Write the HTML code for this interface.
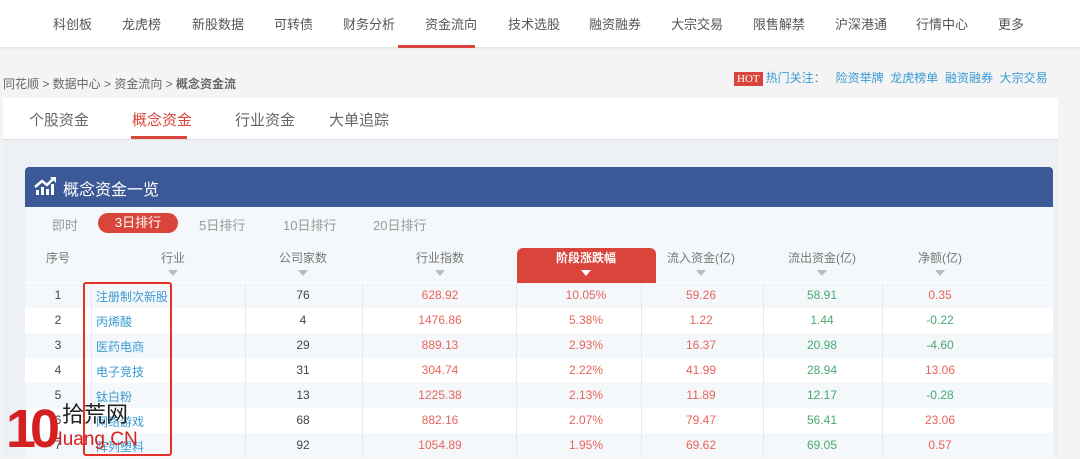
<!DOCTYPE html>
<html><head><meta charset="utf-8"><style>
*{margin:0;padding:0;box-sizing:border-box}
body{width:1080px;height:457px;overflow:hidden;background:#f4f4f4;font-family:"Liberation Sans","Noto Sans CJK SC",sans-serif;position:relative;font-size:13px;color:#333}
.nav{position:absolute;left:0;top:0;width:1080px;height:47px;background:#fff;box-shadow:0 1px 3px #ddd}
.nav span{position:absolute;top:14px;font-size:13px;color:#555}
.ul{position:absolute;left:398px;top:45px;width:77px;height:3px;background:#d9453b}
.bc{position:absolute;left:3px;top:75px;font-size:12px;color:#666}
.hot{position:absolute;top:69px;left:734px;font-size:12px;color:#3a9ad4}
.hot b{display:inline-block;background:#d9453b;color:#fff;font-family:"Liberation Serif",serif;font-weight:normal;font-size:11px;padding:0 3px;line-height:14px;margin-right:3px}
.tabs{position:absolute;left:3px;top:98px;width:1055px;height:42px;background:#fff;border-bottom:1px solid #ddd}
.tabs span{position:absolute;top:11px;font-size:15px;color:#666}
.content{position:absolute;left:3px;top:140px;width:1055px;height:317px;background:#edf1f5}
.card{position:absolute;left:25px;top:167px;width:1028px;height:290px;background:#fff}
.chead{height:40px;background:#3b5997;border-radius:4px 4px 0 0;color:#fff;font-size:16px;padding:9px 0 0 38px;position:relative}
.filt{height:33px;background:#f5f8fa;position:relative;font-size:13px;color:#999}
.filt span{position:absolute;top:8px}
.filt .on{background:#d9453b;color:#fff;border-radius:10px;left:73px;width:80px;height:20px;top:6px;text-align:center;line-height:20px}
.hdr{position:absolute;top:249px;font-size:12px;color:#777}
.tri{display:block;margin:4px auto 0;width:0;height:0;border-left:5px solid transparent;border-right:5px solid transparent;border-top:6px solid #bbb}
.row{position:absolute;left:25px;width:1028px;height:25px}
.cell{position:absolute;top:5px;font-size:12px;text-align:center;color:#444}
.r{color:#e8645c!important}.g{color:#4aa872!important}.b{color:#3a9ad4!important}
</style></head><body>
<div class="nav">
<span style="left:53px">科创板</span><span style="left:122px">龙虎榜</span><span style="left:192px">新股数据</span><span style="left:274px">可转债</span><span style="left:343px">财务分析</span><span style="left:425px">资金流向</span><span style="left:508px">技术选股</span><span style="left:589px">融资融券</span><span style="left:671px">大宗交易</span><span style="left:753px">限售解禁</span><span style="left:835px">沪深港通</span><span style="left:916px">行情中心</span><span style="left:998px">更多</span>
<div class="ul"></div></div>
<div class="bc">同花顺 &gt; 数据中心 &gt; 资金流向 &gt; <b>概念资金流</b></div>
<div class="hot"><b>HOT</b>热门关注：&nbsp;&nbsp; 险资举牌&nbsp; 龙虎榜单&nbsp; 融资融券&nbsp; 大宗交易</div>
<div class="tabs"><span style="left:26px">个股资金</span><span style="left:129px;color:#d9453b">概念资金</span><span style="left:232px">行业资金</span><span style="left:326px">大单追踪</span>
<div style="position:absolute;left:128px;top:38px;width:56px;height:3px;background:#d9453b"></div></div>
<div class="content"></div>
<div class="card">
<div class="chead"><svg style="position:absolute;left:9px;top:8px" width="24" height="22" viewBox="0 0 24 22"><path d="M2 20V15h3v5zM7 20v-8h3v8zM12 20v-6h3v6zM17 20V9h3v11z" fill="#fff"/><path d="M1 12L8 6l5 4 7-7" stroke="#fff" stroke-width="2.5" fill="none"/><path d="M16 2h6v6z" fill="#fff"/></svg>概念资金一览</div>
<div class="filt"><span style="left:27px">即时</span><span class="on">3日排行</span><span style="left:174px">5日排行</span><span style="left:258px">10日排行</span><span style="left:348px">20日排行</span></div>
<div style="position:absolute;left:0;top:73px;width:1028px;height:42px;background:#f5f8fa"></div>
<div style="position:absolute;left:492px;top:81px;width:139px;height:35px;background:#d9453b;border-radius:6px 6px 0 0"></div>
</div>
<div class="hdr" style="left:35px;width:46px;text-align:center">序号</div>
<div class="hdr" style="left:148px;width:50px;text-align:center">行业<i class="tri"></i></div>
<div class="hdr" style="left:273px;width:60px;text-align:center">公司家数<i class="tri"></i></div>
<div class="hdr" style="left:410px;width:60px;text-align:center">行业指数<i class="tri"></i></div>
<div class="hdr" style="left:550px;width:72px;text-align:center;color:#fff;font-weight:bold">阶段涨跌幅<i class="tri" style="border-top-color:#fff"></i></div>
<div class="hdr" style="left:661px;width:80px;text-align:center">流入资金(亿)<i class="tri"></i></div>
<div class="hdr" style="left:782px;width:80px;text-align:center">流出资金(亿)<i class="tri"></i></div>
<div class="hdr" style="left:910px;width:60px;text-align:center">净额(亿)<i class="tri"></i></div>

<div class="row" style="top:283px;background:#f5f8fa"></div>
<div class="row" style="top:333px;background:#f5f8fa"></div>
<div class="row" style="top:383px;background:#f5f8fa"></div>
<div class="row" style="top:433px;background:#f5f8fa"></div>
<div style="position:absolute;top:283px;left:91px;width:1px;height:174px;background:#e6eaee"></div>
<div style="position:absolute;top:283px;left:245px;width:1px;height:174px;background:#e6eaee"></div>
<div style="position:absolute;top:283px;left:362px;width:1px;height:174px;background:#e6eaee"></div>
<div style="position:absolute;top:283px;left:516px;width:1px;height:174px;background:#e6eaee"></div>
<div style="position:absolute;top:283px;left:641px;width:1px;height:174px;background:#e6eaee"></div>
<div style="position:absolute;top:283px;left:763px;width:1px;height:174px;background:#e6eaee"></div>
<div style="position:absolute;top:283px;left:882px;width:1px;height:174px;background:#e6eaee"></div>

<div id="rows"></div>
<div style="position:absolute;left:83px;top:282px;width:89px;height:174px;border:2px solid #e8302a;border-radius:3px"></div>

<div style="position:absolute;left:6px;top:402px;font-family:'Liberation Sans',sans-serif;font-weight:bold;font-size:54px;line-height:54px;color:#d42020;letter-spacing:-6px">10</div>
<div style="position:absolute;left:62px;top:402px;font-size:22px;color:#222;line-height:26px">拾荒网</div>
<div style="position:absolute;left:49px;top:429px;font-size:19px;color:#d42020;line-height:22px">Huang.CN</div>
<script>
var d=[["注册制次新股",76,"628.92","10.05%","59.26","58.91","0.35"],["丙烯酸",4,"1476.86","5.38%","1.22","1.44","-0.22"],["医药电商",29,"889.13","2.93%","16.37","20.98","-4.60"],["电子竞技",31,"304.74","2.22%","41.99","28.94","13.06"],["钛白粉",13,"1225.38","2.13%","11.89","12.17","-0.28"],["网络游戏",68,"882.16","2.07%","79.47","56.41","23.06"],["阵列塑料",92,"1054.89","1.95%","69.62","69.05","0.57"]];
var h="";d.forEach(function(r,i){var t=283+i*25;function c(x,w,txt,cl,al){h+='<div class="cell '+(cl||'')+'" style="top:'+(t+5)+'px;left:'+x+'px;width:'+w+'px;text-align:'+(al||'center')+'">'+txt+'</div>';}
c(35,46,i+1);c(96,120,r[0],"b","left");c(273,60,r[1]);c(400,80,r[2],"r");c(546,80,r[3],"r");c(661,80,r[4],"r");c(782,80,r[5],"g");c(900,80,r[6],r[6][0]=="-"?"g":"r");});
document.getElementById("rows").outerHTML=h;
</script>
</body></html>
